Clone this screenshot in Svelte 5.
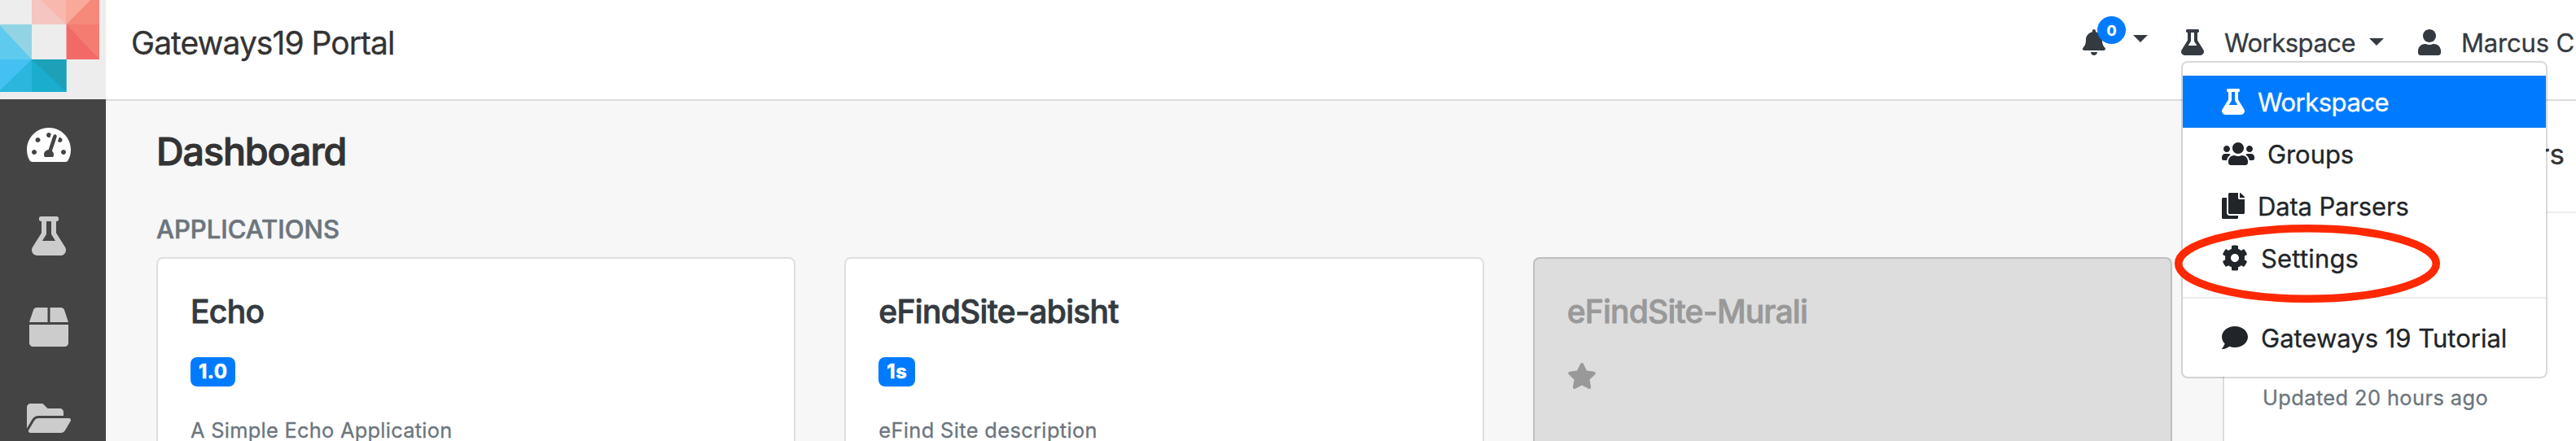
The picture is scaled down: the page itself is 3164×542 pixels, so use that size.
<script>
  const icons = {
    gauge: { w: 576, d: 'M288 32C128.94 32 0 160.94 0 320c0 52.8 14.25 102.26 39.06 144.8 5.61 9.62 16.3 15.2 27.44 15.2h443c11.14 0 21.83-5.58 27.44-15.2C561.75 422.26 576 372.8 576 320c0-159.06-128.94-288-288-288zm0 64c14.71 0 26.58 10.13 30.32 23.65-1.11 2.26-2.64 4.23-3.45 6.67l-9.22 27.67c-5.13 3.49-10.97 6.01-17.64 6.01-17.67 0-32-14.33-32-32S270.33 96 288 96zM96 384c-17.67 0-32-14.33-32-32s14.33-32 32-32 32 14.33 32 32-14.33 32-32 32zm48-160c-17.67 0-32-14.33-32-32s14.33-32 32-32 32 14.33 32 32-14.33 32-32 32zm246.77-72.41l-61.33 184C343.13 347.33 352 364.54 352 384c0 11.72-3.38 22.55-8.88 32H232.88c-5.5-9.45-8.88-20.28-8.88-32 0-33.94 26.5-61.43 59.9-63.59l61.34-184.01c4.17-12.56 17.73-19.45 30.36-15.17 12.57 4.19 19.35 17.79 15.17 30.36zm14.66 57.2l15.52-46.55c3.47-1.29 7.13-2.23 11.05-2.23 17.67 0 32 14.33 32 32s-14.33 32-32 32c-11.38-.01-20.89-6.28-26.57-15.22zM480 384c-17.67 0-32-14.33-32-32s14.33-32 32-32 32 14.33 32 32-14.33 32-32 32z' },
    flask: { w: 448, d: 'M437.2 403.5L320 215V64h8c13.3 0 24-10.7 24-24V24c0-13.3-10.7-24-24-24H120c-13.3 0-24 10.7-24 24v16c0 13.3 10.7 24 24 24h8v151L10.8 403.5C-18.5 450.6 15.3 512 70.9 512h306.2c55.7 0 89.4-61.5 60.1-108.5zM137.9 320l48.2-77.6c3.7-5.2 5.8-11.6 5.8-18.4V64h64v160c0 6.9 2.2 13.2 5.8 18.4l48.2 77.6h-172z' },
    box: { w: 512, d: 'M509.5 184.6L458.9 32.8C452.4 13.2 434.1 0 413.4 0H272v192h238.7c-.4-2.5-.4-5-1.2-7.4zM240 0H98.6c-20.7 0-39 13.2-45.5 32.8L2.5 184.6c-.8 2.4-.8 4.9-1.2 7.4H240V0zM0 224v240c0 26.5 21.5 48 48 48h416c26.5 0 48-21.5 48-48V224H0z' },
    folder: { w: 576, d: 'M572.694 292.093L500.27 416.248A63.997 63.997 0 0 1 444.989 448H45.025c-18.523 0-30.064-20.093-20.731-36.093l72.424-124.155A64 64 0 0 1 152 256h399.964c18.523 0 30.064 20.093 20.73 36.093zM152 224h328v-48c0-26.51-21.49-48-48-48H272l-64-64H48C21.49 64 0 85.49 0 112v278.046l69.077-118.418C86.214 242.25 117.989 224 152 224z' },
    bell: { w: 448, d: 'M224 512c35.32 0 63.97-28.65 63.97-64H160.03c0 35.35 28.65 64 63.97 64zm215.39-149.71c-19.32-20.76-55.47-51.99-55.47-154.29 0-77.7-54.48-139.9-127.94-155.16V32c0-17.67-14.32-32-31.98-32s-31.98 14.33-31.98 32v20.84C118.56 68.1 64.08 130.3 64.08 208c0 102.3-36.15 133.53-55.47 154.29-6 6.45-8.66 14.16-8.61 21.71.11 16.4 12.98 32 32.1 32h383.8c19.12 0 32-15.6 32.1-32 .05-7.55-2.61-15.27-8.61-21.71z' },
    user: { w: 448, d: 'M224 256c70.7 0 128-57.3 128-128S294.7 0 224 0 96 57.3 96 128s57.3 128 128 128zm89.6 32h-16.7c-22.2 10.2-46.9 16-72.9 16s-50.6-5.8-72.9-16h-16.7C60.2 288 0 348.2 0 422.4V464c0 26.5 21.5 48 48 48h352c26.5 0 48-21.5 48-48v-41.6c0-74.2-60.2-134.4-134.4-134.4z' },
    users: { w: 640, d: 'M96 224c35.3 0 64-28.7 64-64s-28.7-64-64-64-64 28.7-64 64 28.7 64 64 64zm448 0c35.3 0 64-28.7 64-64s-28.7-64-64-64-64 28.7-64 64 28.7 64 64 64zm32 32h-64c-17.6 0-33.5 7.1-45.1 18.6 40.3 22.1 68.9 62 75.1 109.4h66c17.7 0 32-14.3 32-32v-32c0-35.3-28.7-64-64-64zm-256 0c61.9 0 112-50.1 112-112S381.9 32 320 32 208 82.1 208 144s50.1 112 112 112zm76.8 32h-8.3c-20.8 10-43.9 16-68.5 16s-47.6-6-68.5-16h-8.3C179.6 288 128 339.6 128 403.2V432c0 26.5 21.5 48 48 48h288c26.5 0 48-21.5 48-48v-28.8c0-63.6-51.6-115.2-115.2-115.2zm-223.7-13.4C161.5 263.1 145.6 256 128 256H64c-35.3 0-64 28.7-64 64v32c0 17.7 14.3 32 32 32h65.9c6.3-47.4 34.9-87.3 75.2-109.4z' },
    copy: { w: 448, d: 'M320 448v40c0 13.255-10.745 24-24 24H24c-13.255 0-24-10.745-24-24V120c0-13.255 10.745-24 24-24h72v296c0 30.879 25.121 56 56 56h168zm0-344V0H152c-13.255 0-24 10.745-24 24v368c0 13.255 10.745 24 24 24h272c13.255 0 24-10.745 24-24V128H344c-13.2 0-24-10.8-24-24zm120.971-31.029L375.029 7.029A24 24 0 0 0 358.059 0H352v96h96v-6.059a24 24 0 0 0-7.029-16.97z' },
    cog: { w: 512, d: 'M487.4 315.7l-42.6-24.6c4.3-23.2 4.3-47 0-70.2l42.6-24.6c4.9-2.8 7.1-8.6 5.5-14-11.1-35.6-30-67.8-54.7-94.6-3.8-4.1-10-5.1-14.8-2.3L380.8 110c-17.9-15.4-38.5-27.3-60.8-35.1V25.8c0-5.6-3.9-10.5-9.4-11.7-36.7-8.2-74.3-7.8-109.2 0-5.5 1.2-9.4 6.1-9.4 11.7V75c-22.2 7.9-42.8 19.8-60.8 35.1L88.7 85.5c-4.9-2.8-11-1.9-14.8 2.3-24.7 26.7-43.6 58.9-54.7 94.6-1.7 5.4.6 11.2 5.5 14L67.3 221c-4.3 23.2-4.3 47 0 70.2l-42.6 24.6c-4.9 2.8-7.1 8.6-5.5 14 11.1 35.6 30 67.8 54.7 94.6 3.8 4.1 10 5.1 14.8 2.3l42.6-24.6c17.9 15.4 38.5 27.3 60.8 35.1v49.2c0 5.6 3.9 10.5 9.4 11.7 36.7 8.2 74.3 7.8 109.2 0 5.5-1.2 9.4-6.1 9.4-11.7v-49.2c22.2-7.9 42.8-19.8 60.8-35.1l42.6 24.6c4.9 2.8 11 1.9 14.8-2.3 24.7-26.7 43.6-58.9 54.7-94.6 1.5-5.5-.7-11.3-5.6-14.1zM256 336c-44.1 0-80-35.9-80-80s35.9-80 80-80 80 35.9 80 80-35.9 80-80 80z' },
    comment: { w: 512, d: 'M256 32C114.6 32 0 125.1 0 240c0 49.6 21.4 95 57 130.7C44.5 421.1 2.7 466 2.2 466.5c-2.2 2.3-2.8 5.7-1.5 8.7S4.8 480 8 480c66.3 0 116-31.8 140.6-51.4 32.7 12.3 69 19.4 107.4 19.4 141.4 0 256-93.1 256-208S397.4 32 256 32z' },
    star: { w: 576, d: 'M259.3 17.8L194 150.2 47.9 171.5c-26.2 3.8-36.7 36.1-17.7 54.6l105.7 103-25 145.5c-4.5 26.3 23.2 46 46.4 33.7L288 439.6l130.7 68.7c23.2 12.2 50.9-7.4 46.4-33.7l-25-145.5 105.7-103c19-18.5 8.5-50.8-17.7-54.6L382 150.2 316.7 17.8c-11.7-23.6-45.6-23.9-57.4 0z' }
  };

  const sideLinks = [
    { icon: 'gauge', active: true },
    { icon: 'flask' },
    { icon: 'box' },
    { icon: 'folder' }
  ];

  const menu = [
    { icon: 'flask', label: 'Workspace', active: true, ls: -0.5 },
    { icon: 'users', label: 'Groups', ls: -0.08 },
    { icon: 'copy', label: 'Data Parsers', ls: -0.15 },
    { icon: 'cog', label: 'Settings', ls: 0.18 }
  ];

  const apps = [
    { name: 'Echo', version: '1.0', about: 'A Simple Echo Application', ls: -0.66, als: 0.27 },
    { name: 'eFindSite-abisht', version: '1s', about: 'eFind Site description', ls: -0.71, als: 0.36 },
    { name: 'eFindSite-Murali', disabled: true, ls: -0.79 }
  ];
</script>

{#snippet icon(name, size = 32)}
  <svg class="icon" viewBox="0 0 {icons[name].w} 512" width={(icons[name].w * size) / 512} height={size} aria-hidden="true">
    <path d={icons[name].d} fill="currentColor" />
  </svg>
{/snippet}

<div class="page">
  <aside class="sidebar">
    <svg class="logo" width="130" height="122" viewBox="0 0 130 122" aria-hidden="true">
      <rect width="130" height="122" fill="#ededed" />
      <path fill="#f4c5c1" d="M39 0h42.5v30H39z" />
      <path fill="#f8b8ae" d="M50 0h31.5v30z" />
      <path fill="#f58a7b" d="M81.5 0H122v30H81.5z" />
      <path fill="#f9a999" d="M81.5 0H111L81.5 30z" />
      <path fill="#f16a68" d="M81.5 30H122v43H81.5z" />
      <path fill="#f47c71" d="M81.5 30H122v43z" />
      <path fill="#5ecbee" d="M0 30h39v43H0z" />
      <path fill="#92d4e4" d="M0 30h39v43L0 31.5z" />
      <path fill="#2bb6de" d="M0 73h39v40H0z" />
      <path fill="#44c1f2" d="M0 73h39L0 111z" />
      <path fill="#1badce" d="M39 73h42.5v40H39z" />
      <path fill="#1ca1b8" d="M39 73h42.5v40z" />
    </svg>
    <nav class="side-links">
      {#each sideLinks as link}
        <a class="side-link" class:active={link.active}>{@render icon(link.icon, 48)}</a>
      {/each}
    </nav>
  </aside>

  <div class="body">
    <header class="topbar">
      <div class="brand">Gateways19 Portal</div>
      <nav class="nav">
        <div class="nav-item bell">
          {@render icon('bell')}
          <span class="count">0</span>
          <span class="caret"></span>
        </div>
        <div class="nav-item workspace">
          {@render icon('flask')}
          <span class="label">Workspace</span>
          <span class="caret"></span>
          <div class="menu">
            {#each menu as item}
              <a class="menu-item" class:active={item.active}>
                {@render icon(item.icon)}
                <span class="menu-label" style="letter-spacing: {item.ls}px">{item.label}</span>
              </a>
            {/each}
            <div class="divider"></div>
            <a class="menu-item">{@render icon('comment')}<span class="menu-label">Gateways 19 Tutorial</span></a>
            <svg class="ring" width="328" height="98" viewBox="0 0 328 98" aria-hidden="true">
              <ellipse cx="164" cy="49" rx="158.3" ry="43.2" fill="none" stroke="#ff2800" stroke-width="9.5" />
            </svg>
          </div>
        </div>
        <div class="nav-item user">
          {@render icon('user')}
          <span class="label">Marcus C</span>
        </div>
      </nav>
    </header>

    <div class="content">
      <main class="main">
        <h1>Dashboard</h1>
        <h2>APPLICATIONS</h2>
        <div class="cards">
          {#each apps as app}
            <article class="card" class:disabled={app.disabled}>
              <h3 style="letter-spacing: {app.ls}px">{app.name}</h3>
              {#if app.disabled}
                <div class="star">{@render icon('star')}</div>
              {:else}
                <span class="badge">{app.version}</span>
                <p style="letter-spacing: {app.als}px">{app.about}</p>
              {/if}
            </article>
          {/each}
        </div>
      </main>
      <section class="panel">
        <div class="panel-head">rs</div>
        <div class="updated">Updated 20 hours ago</div>
      </section>
    </div>
  </div>
</div>

<style>
  :global(body) { margin: 0; overflow: hidden; }
  .page {
    display: flex;
    height: 542px;
    overflow: hidden;
    background: #f7f7f7;
    font-family: Inter, "Liberation Sans", sans-serif;
    font-size: 31px;
    color: #333;
    -webkit-text-stroke: 0.3px;
  }
  .icon, .logo { display: block; flex: none; }
  h1, h2, h3, p { margin: 0; }

  .sidebar { flex: none; width: 130px; background: #444; }
  .side-links { display: flex; flex-direction: column; gap: 64px; padding: 32px 10px 0 0; }
  .side-link { display: flex; justify-content: center; color: #ccc; }
  .side-link.active { color: #fff; }

  .body { flex: 1; min-width: 0; display: flex; flex-direction: column; }
  .topbar {
    flex: none;
    display: flex;
    justify-content: space-between;
    box-sizing: border-box;
    height: 124px;
    padding: 29px 0 0 31px;
    background: #fff;
    border-bottom: 2px solid #dcdcdc;
    line-height: 48px;
    white-space: nowrap;
  }
  .brand { font-size: 39px; letter-spacing: -0.96px; }
  .nav { display: flex; width: 606px; color: #343a40; }
  .nav-item { position: relative; display: flex; flex: none; align-items: flex-start; height: 48px; }
  .nav-item > .icon { margin-top: 7px; }
  .caret {
    width: 0;
    height: 0;
    margin-top: 18px;
    border: solid transparent;
    border-width: 9.6px 9.6px 0;
    border-top-color: currentColor;
  }
  .bell { width: 121px; }
  .bell .caret { margin: 14px 0 0 34px; }
  .count {
    position: absolute;
    left: 18px;
    top: -9px;
    width: 35px;
    height: 34px;
    border-radius: 50%;
    background: #007bff;
    color: #fff;
    font-size: 18px;
    font-weight: 700;
    line-height: 35px;
    text-align: center;
  }
  .workspace { width: 291px; }
  .workspace .label { margin-left: 25px; letter-spacing: -0.5px; }
  .workspace .caret { margin-left: 17px; }
  .user .label { margin-left: 25px; letter-spacing: -0.17px; }

  .menu {
    position: absolute;
    z-index: 2;
    left: 0;
    top: 46px;
    box-sizing: border-box;
    width: 450px;
    padding: 16px 0;
    border: 2px solid rgba(0, 0, 0, 0.15);
    border-radius: 8px;
    background: #fff;
    background-clip: padding-box;
    color: #212529;
  }
  .menu-item { display: flex; align-items: center; gap: 16px; height: 64px; padding: 0 48px; }
  .menu-item.active { background: #007bff; color: #fff; }
  .menu-label { padding-top: 2px; }
  .divider { height: 2px; margin: 16px 0; background: #e9ecef; }
  .ring { position: absolute; left: -11px; top: 198px; }

  .content { flex: 1; min-height: 0; display: flex; }
  .main { flex: none; box-sizing: border-box; width: 2600px; padding: 34px 62px 0; }
  h1 { font-size: 46.6px; font-weight: 500; line-height: 56px; letter-spacing: -1.09px; -webkit-text-stroke: 1px; }
  h2 { margin: 48px 0 14px; font-size: 31px; font-weight: 500; line-height: 40px; color: #6c757d; -webkit-text-stroke: 0.6px; }
  .cards { display: grid; grid-template-columns: repeat(3, 1fr); gap: 60px; height: 300px; }
  .card {
    padding: 41px 40px;
    border: 2px solid #dfdfdf;
    border-radius: 8px;
    background: #fff;
    color: #343a40;
  }
  .card.disabled { background: #ddd; border-color: #bfbfbf; color: #999; }
  h3 { font-size: 39px; font-weight: 500; line-height: 48px; -webkit-text-stroke: 0.8px; }
  .badge {
    display: block;
    width: fit-content;
    margin: 32px 0 34px;
    padding: 0 10px;
    border-radius: 8px;
    background: #007bff;
    color: #fff;
    font-size: 24px;
    font-weight: 700;
    line-height: 36px;
    letter-spacing: 0.5px;
    -webkit-text-stroke: 0.6px;
  }
  .card p { font-size: 25.4px; line-height: 39px; color: #6c757d; }
  .star { padding-top: 39px; }

  .panel { flex: 1; border-left: 2px solid #dcdcdc; background: #fff; }
  .panel-head {
    box-sizing: border-box;
    height: 138px;
    padding: 41px 14px 0 0;
    border-bottom: 2px solid #eee;
    font-size: 35px;
    line-height: 48px;
    text-align: right;
  }
  .updated {
    padding: 207px 0 0 47px;
    font-size: 25.4px;
    line-height: 39px;
    letter-spacing: 0.41px;
    color: #6c757d;
  }
</style>
